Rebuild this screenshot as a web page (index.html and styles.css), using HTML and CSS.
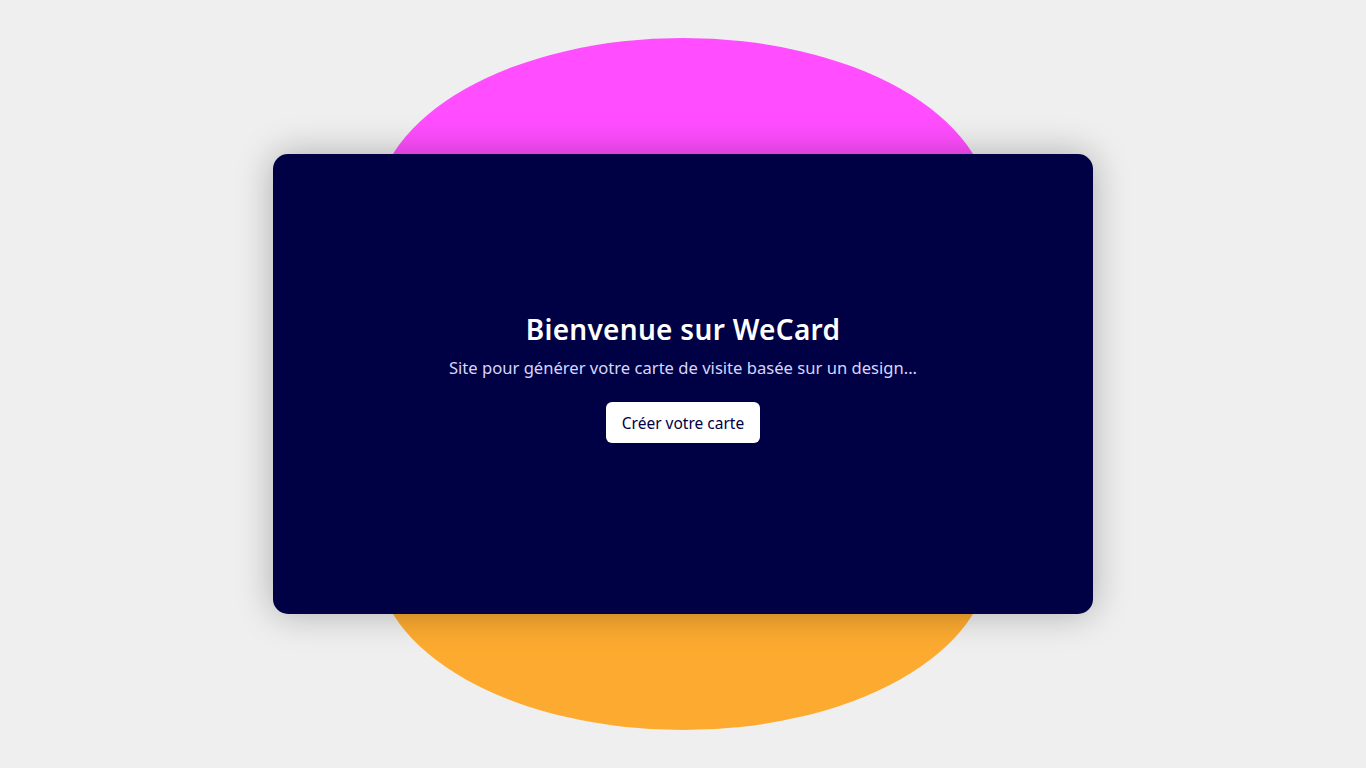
FILE: index.html
```html
<!DOCTYPE html>
<html lang="fr">
<head>
<meta charset="utf-8">
<title>WeCard</title>
<link rel="stylesheet" href="styles.css">
</head>
<body>
<main class="stage">
  <div class="blob">
    <div class="blob-top"></div>
    <div class="blob-bottom"></div>
  </div>
  <section class="card">
    <h1 class="title">Bienvenue sur WeCard</h1>
    <p class="subtitle">Site pour générer votre carte de visite basée sur un design...</p>
    <button class="cta" type="button">Créer votre carte</button>
  </section>
</main>
</body>
</html>
```
FILE: styles.css
```css
html, body {
  margin: 0;
  padding: 0;
}
body {
  background: #efefef;
  font-family: "Noto Sans", "Open Sans", sans-serif;
  height: 100vh;
  overflow: hidden;
}
.stage {
  height: 100vh;
  display: grid;
  place-items: center;
}
.blob {
  grid-area: 1 / 1;
  display: flex;
  flex-direction: column;
}
.blob-top,
.blob-bottom {
  width: 45vw;
  height: 45vh;
}
.blob-top {
  background: #ff4dff;
  border-radius: 50% 50% 0 0;
}
.blob-bottom {
  background: #fdab30;
  border-radius: 0 0 50% 50%;
}
.card {
  grid-area: 1 / 1;
  width: 820px;
  height: 460px;
  background: #000044;
  border-radius: 15px;
  box-shadow: 0 0 36px rgba(0, 0, 0, 0.28);
  display: flex;
  flex-direction: column;
  align-items: center;
  justify-content: center;
  padding-bottom: 14px;
  box-sizing: border-box;
}
.title {
  margin: 0 0 6px;
  color: #ffffff;
  font-size: 28px;
  font-weight: 600;
  line-height: 36px;
  letter-spacing: 0.3px;
}
.subtitle {
  margin: 4px 0 0;
  color: #d6d6ff;
  font-size: 16.6px;
  line-height: 22px;
}
.cta {
  margin-top: 23px;
  height: 41px;
  padding: 0 16px;
  background: #ffffff;
  color: #000044;
  border: none;
  border-radius: 6px;
  font-family: inherit;
  font-size: 15.5px;
}
```
